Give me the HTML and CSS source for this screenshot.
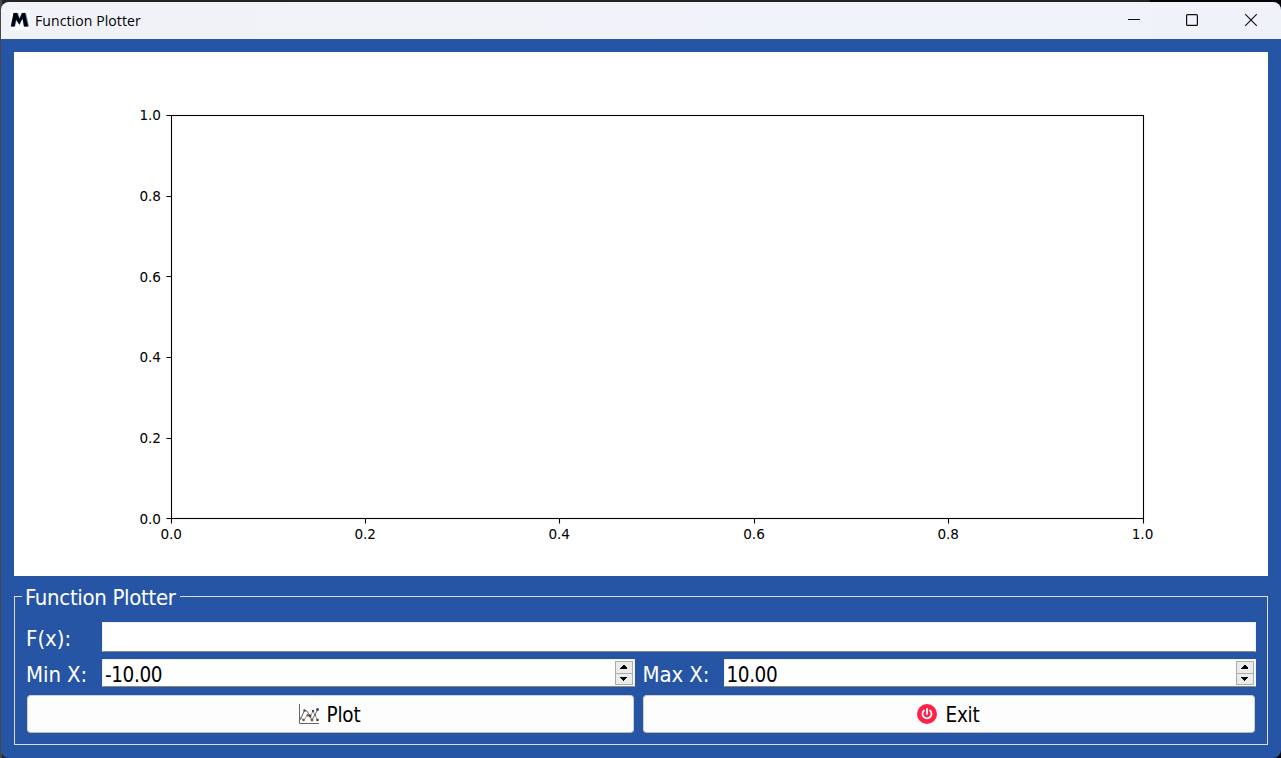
FILE: index.html
```html
<!DOCTYPE html>
<html lang="en">
<head>
<meta charset="utf-8">
<title>Function Plotter</title>
<link rel="stylesheet" href="styles.css">
</head>
<body>
<div class="window">
  <header class="titlebar">
    <svg class="app-icon" width="20" height="20" viewBox="0 0 20 20">
      <rect width="20" height="20" fill="#fff"/>
      <path d="M5 16.500L7 8L9.500 15L12.500 8L14 16.500H19L16 3H12L9.500 8L8 3H4L1 16.500Z" fill="#3a68ad" stroke="#a9c7ec" stroke-width=".6"/>
      <path d="M.8 16.500L3.500 3H7L9.500 9L12 3H15L18 16.500H14L12.500 8.500L9.200 14.500L6 9.500L4.500 16.500Z" fill="#03060c"/>
    </svg>
    <span class="title">Function Plotter</span>
    <svg class="controls" width="132" height="14" viewBox="0 0 132 14" fill="none" stroke="#111" stroke-width="1.2">
      <path d="M0 6.500H12"/>
      <rect x="58.600" y="1.600" width="10.800" height="10.800" rx="1"/>
      <path d="M117.200 1.200L128.800 12.800M128.800 1.200L117.200 12.800"/>
    </svg>
  </header>
  <main class="content">
    <svg class="chart" width="1254" height="524" viewBox="0 0 1254 524">
      <rect class="axis" x="157.500" y="63.500" width="972" height="403"/>
      <path class="axis" d="M157.500 467v4.500M351.500 467v4.500M545.500 467v4.500M740.500 467v4.500M934.500 467v4.500M1129.500 467v4.500M157 63.500h-4.500M157 144.500h-4.500M157 224.500h-4.500M157 305.500h-4.500M157 386.500h-4.500M157 466.500h-4.500"/>
      <g class="ticks x-ticks">
        <text x="157.200" y="487">0.0</text><text x="351.200" y="487">0.2</text><text x="545.200" y="487">0.4</text><text x="740" y="487">0.6</text><text x="934.200" y="487">0.8</text><text x="1128.500" y="487">1.0</text>
      </g>
      <g class="ticks y-ticks">
        <text x="147" y="68">1.0</text><text x="147" y="149">0.8</text><text x="147" y="230">0.6</text><text x="147" y="310">0.4</text><text x="147" y="391">0.2</text><text x="147" y="472">0.0</text>
      </g>
    </svg>
    <section class="group">
      <h1 class="legend">Function Plotter</h1>
      <div class="row fx-row">
        <span class="label">F(x):</span>
        <div class="field"></div>
      </div>
      <div class="row range-row">
        <span class="label">Min X:</span>
        <div class="field spin"><span class="value">-10.00</span>
          <svg class="stepper" width="19" height="26" viewBox="0 0 19 26"><use href="#steps"/></svg>
        </div>
        <span class="label max-label">Max X:</span>
        <div class="field spin"><span class="value">10.00</span>
          <svg class="stepper" width="19" height="26" viewBox="0 0 19 26">
            <g id="steps"><rect x=".5" y="1.500" width="17" height="23" fill="#ebebeb" stroke="#acacac"/><path d="M0 13.500H18" stroke="#acacac"/><path d="M5 9V8H6V7H7V6H8V5H10V6H11V7H12V8V9ZM5 17H12V18H11V19H10V20H9V21H8V20H7V19H6V18H5Z" fill="#000"/></g>
          </svg>
        </div>
      </div>
      <div class="row buttons">
        <div class="button plot">
          <svg width="22" height="22" viewBox="0 0 22 22" fill="none">
            <path d="M1.500 1V20.500H21" stroke="#666"/>
            <path d="M2 17L6.500 7.500L9 8L14 17L19.500 7" stroke="#555" stroke-width=".9"/>
            <path d="M2 14L5.500 17L10 12L12 14L15 8L19.500 17" stroke="#888" stroke-width=".9"/>
            <g fill="#354c60"><circle cx="6.500" cy="7.500" r="1.200"/><circle cx="12" cy="13" r="1.400"/><circle cx="15" cy="8" r="1.200"/><circle cx="19.500" cy="6.500" r="1.500"/><circle cx="19.500" cy="17" r="1.300"/></g>
            <g fill="#91532f"><circle cx="5.500" cy="17" r="1.300"/><circle cx="9.700" cy="12.300" r="1.200"/><circle cx="14" cy="17" r="1.400"/><circle cx="17" cy="12" r="1"/></g>
          </svg><span>Plot</span>
        </div>
        <div class="button exit">
          <svg width="20" height="20" viewBox="0 0 20 20"><circle cx="10" cy="10" r="10" fill="#ff2147"/><path d="M7 6.500A4.500 4.500 0 1 0 13 6.500M10 4.800V10" fill="none" stroke="#fff" stroke-width="1.800" stroke-linecap="round"/></svg><span>Exit</span>
        </div>
      </div>
    </section>
  </main>
</div>
</body>
</html>
```
FILE: styles.css
```css
* { box-sizing: border-box; }
body {
  margin: 0;
  width: 1281px;
  height: 758px;
  padding: 2px 0 0 1px;
  overflow: hidden;
  background: linear-gradient(90deg, #474743 0 2px, #242322 2px 1150px, #050505 1150px);
  font-family: "DejaVu Sans Condensed", "DejaVu Sans", sans-serif;
  font-stretch: condensed;
}
.window {
  height: 756px;
  border-radius: 8px;
  overflow: hidden;
  background: #2755a5;
}
.titlebar {
  height: 37px;
  display: flex;
  align-items: center;
  padding: 0 21px 1px 9px;
  background: linear-gradient(90deg, #f1f2f8, #eff3f9);
}
.title {
  margin-left: 5px;
  font: 14px "Open Sans", sans-serif;
  letter-spacing: .1px;
  color: #000;
}
.controls { margin-left: auto; }
.content { padding: 13px 13px 0; }
.chart { display: block; background: #fff; }
.axis { fill: none; stroke: #000; stroke-width: 1.1; }
.ticks { font: 13.6px "DejaVu Sans", sans-serif; fill: #000; }
.x-ticks { text-anchor: middle; }
.y-ticks { text-anchor: end; }
.group {
  width: 1254px;
  height: 149px;
  margin-top: 20px;
  padding: 0 11px;
  border: 1px solid #dcdcdc;
}
.legend {
  width: 158px;
  height: 26px;
  margin: -13px 0 0 -4px;
  padding-left: 3px;
  background: #2755a5;
  font-size: 22px;
  font-weight: 400;
  line-height: 28px;
  letter-spacing: -.32px;
  color: #fff;
  white-space: nowrap;
}
.row { display: flex; }
.fx-row { margin-top: 12px; height: 30px; }
.range-row { margin-top: 7px; height: 28px; }
.label {
  flex: 0 0 76px;
  font-size: 22px;
  line-height: 34px;
  color: #fff;
  white-space: nowrap;
}
.range-row .label { line-height: 31px; letter-spacing: -.1px; }
.max-label { flex-basis: 81px; margin-left: 8px; }
.field {
  flex: 1;
  background: #fff;
  border: 1px solid #f0f0f0;
  border-bottom-color: #868686;
}
.spin {
  display: flex;
  justify-content: space-between;
  border-radius: 1px;
  padding: 0 0 0 2px;
}
.value { font-size: 20.500px; line-height: 30px; letter-spacing: -.4px; color: #000; }
.buttons { margin: 8px 1px 0; gap: 9px; }
.button {
  height: 38px;
  display: flex;
  align-items: center;
  justify-content: center;
  gap: 8px;
  background: #fdfdfd;
  border: 1px solid #d0d0d0;
  border-bottom-color: #b9b9b9;
  border-radius: 4px;
  font-size: 20.500px;
  color: #000;
}
.button span { padding-top: 2px; }
.plot { width: 607px; gap: 7px; padding-right: 3px; letter-spacing: -.2px; }
.exit { width: 612px; padding-right: 1px; letter-spacing: -.2px; }
```
